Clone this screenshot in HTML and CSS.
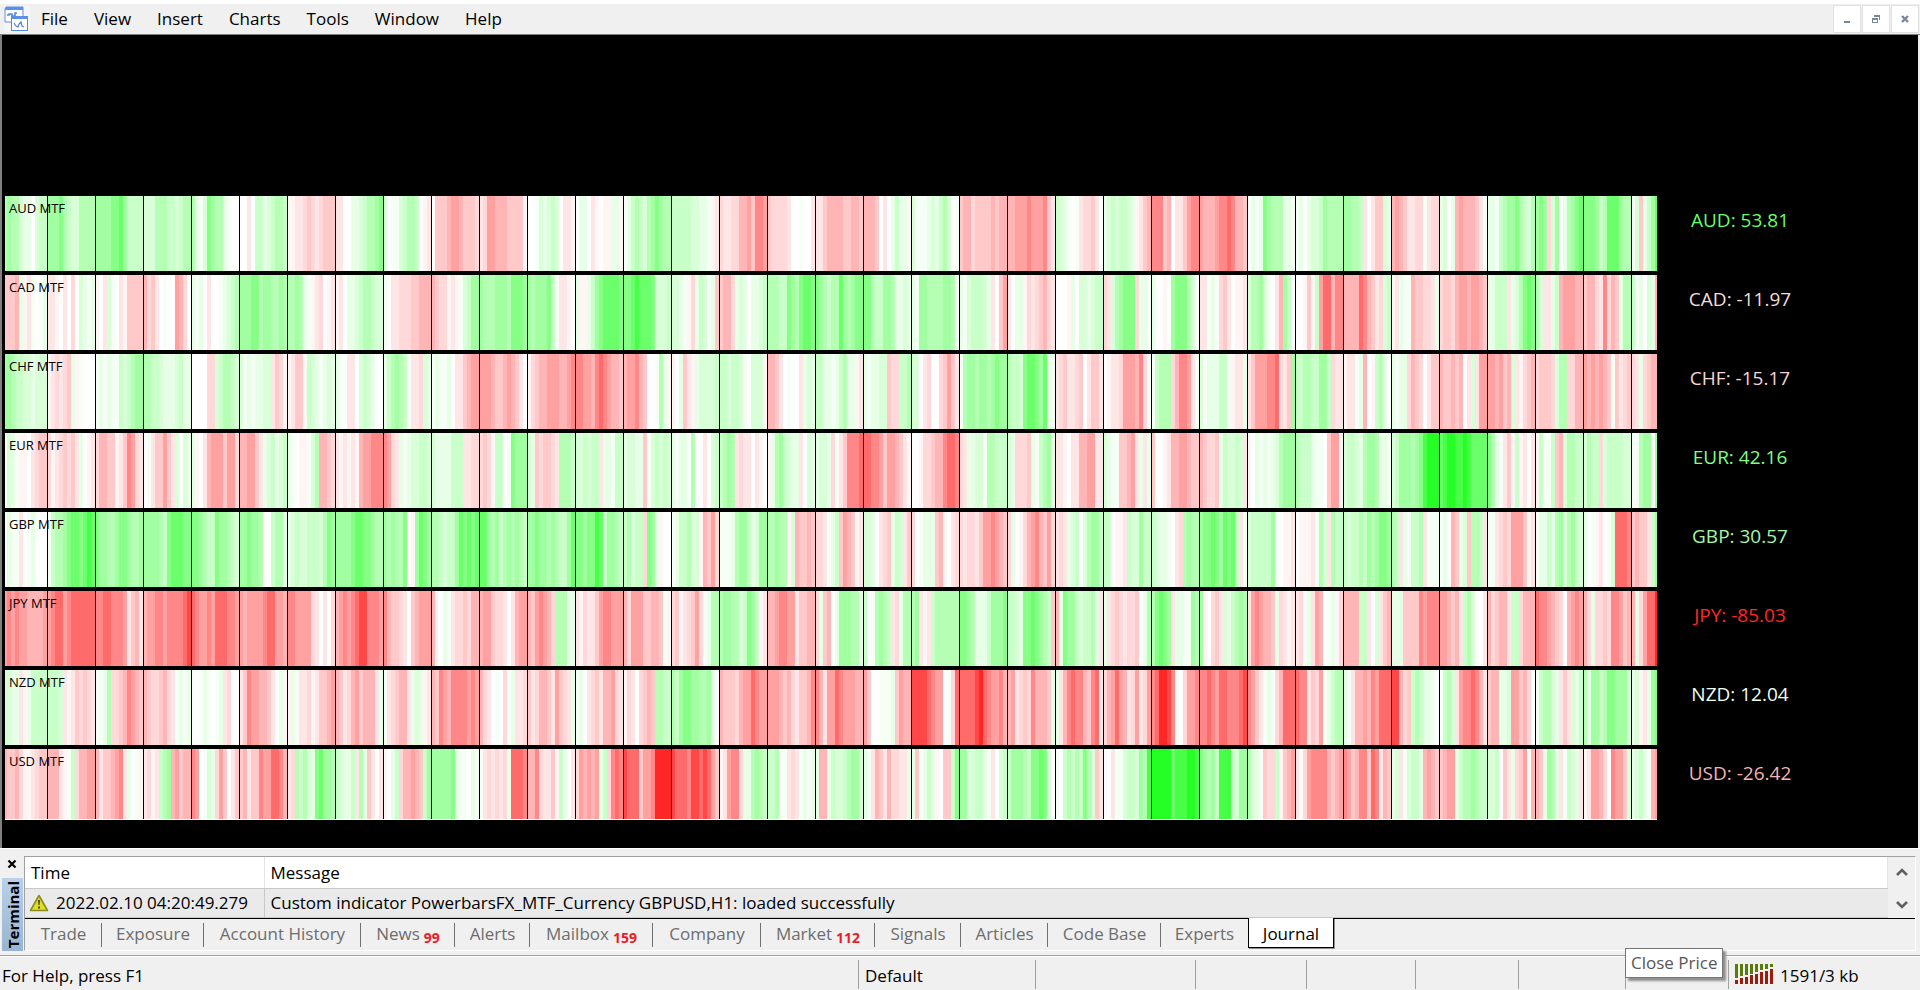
FILE: index.html
```html
<!DOCTYPE html>
<html lang="en">
<head>
<meta charset="utf-8">
<title>Currency strength terminal</title>
<link rel="stylesheet" href="styles.css">
</head>
<body>
<header class="menubar">
  <svg class="app-icon" viewBox="0 0 26 26" aria-hidden="true">
    <rect x="0" y="0" width="26" height="26" fill="#f6f6f6"/>
    <path d="M2 1h17v15H1V3z" fill="#fff" stroke="#5b8fe0" stroke-width="1"/>
    <path d="M2 1h17v3H1z" fill="#5a90e8"/>
    <path d="M3 9h2V8h3v2h3V7h2" fill="none" stroke="#4f86da" stroke-width="1.5"/>
    <rect x="7.500" y="10.500" width="16" height="14" fill="#fff" stroke="#4f8ae0"/>
    <path d="M7 10h17v3H7z" fill="#5a90e8"/>
    <path d="M10 17l2 3 2 1 1-3 2-2 1 4 2 1" fill="none" stroke="#4f86da" stroke-width="1.2"/>
  </svg>
  <nav class="menu" aria-label="Main">
    <button type="button">File</button>
    <button type="button">View</button>
    <button type="button">Insert</button>
    <button type="button">Charts</button>
    <button type="button">Tools</button>
    <button type="button">Window</button>
    <button type="button">Help</button>
  </nav>
  <div class="window-buttons">
    <button type="button" aria-label="Minimize"><svg viewBox="0 0 10 10"><path d="M2 7h6v2H2z" fill="#778899"/></svg></button>
    <button type="button" aria-label="Restore"><svg viewBox="0 0 10 10"><path d="M3 1h6v5H8V3H3zM1 4h6v5H1zM2 6v2h4V6z" fill="#778899" fill-rule="evenodd"/></svg></button>
    <button type="button" aria-label="Close"><svg viewBox="0 0 10 10"><path d="M2 2l6 6M8 2L2 8" stroke="#778899" stroke-width="2.400" fill="none"/></svg></button>
  </div>
</header>

<main class="chart" id="chart"></main>

<section class="terminal">
  <div class="dock">
    <button type="button" class="dock-close" aria-label="Close terminal"><svg viewBox="0 0 10 10"><path d="M1.500 1.500l7 7M8.500 1.500l-7 7" stroke="#000" stroke-width="2.200"/></svg></button>
    <div class="dock-title"><span>Terminal</span></div>
  </div>
  <div class="panel">
    <div class="log">
      <table class="journal">
        <thead><tr><th class="time">Time</th><th>Message</th></tr></thead>
        <tbody><tr>
          <td class="time"><span class="stamp"><svg viewBox="0 0 20 18" aria-hidden="true"><path d="M10 1.500L18.500 16.500H1.500z" fill="#dede2a" stroke="#8c8c1c" stroke-width="1.600" stroke-linejoin="round"/><path d="M9 6h2l-.4 5H9.400zM9 12.500h2v2H9z" fill="#4d4d10"/></svg>2022.02.10 04:20:49.279</span></td>
          <td>Custom indicator PowerbarsFX_MTF_Currency GBPUSD,H1: loaded successfully</td>
        </tr></tbody>
      </table>
      <div class="scroll">
        <button type="button" aria-label="Scroll up"><svg viewBox="0 0 12 10"><path d="M1 8l5-5 5 5" fill="none" stroke="#606060" stroke-width="2.600"/></svg></button>
        <button type="button" aria-label="Scroll down"><svg viewBox="0 0 12 10"><path d="M1 2l5 5 5-5" fill="none" stroke="#606060" stroke-width="2.600"/></svg></button>
      </div>
    </div>
    <div class="tabs" role="tablist">
      <button type="button" role="tab">Trade</button>
      <button type="button" role="tab">Exposure</button>
      <button type="button" role="tab">Account History</button>
      <button type="button" role="tab">News<b>99</b></button>
      <button type="button" role="tab">Alerts</button>
      <button type="button" role="tab">Mailbox<b>159</b></button>
      <button type="button" role="tab">Company</button>
      <button type="button" role="tab">Market<b>112</b></button>
      <button type="button" role="tab">Signals</button>
      <button type="button" role="tab">Articles</button>
      <button type="button" role="tab">Code Base</button>
      <button type="button" role="tab">Experts</button>
      <button type="button" role="tab" class="active" aria-selected="true">Journal</button>
    </div>
  </div>
</section>

<footer class="status">
  <span>For Help, press F1</span>
  <span>Default</span>
  <span></span><span></span><span></span><span></span>
  <span></span>
  <span class="tip-cell"><span class="tooltip" role="tooltip">Close Price</span></span>
  <span class="net"><svg viewBox="0 0 38 20" aria-hidden="true">
    <path d="M0 0h3v14H0zM5 0h3v12H5zM10 0h3v11h-3zM15 0h3v10h-3zM20 0h3v8h-3zM25 0h3v6h-3zM30 0h3v5h-3zM35 0h3v3h-3z" fill="#5a7a0c"/>
    <path d="M0 16h3v4H0zM5 14h3v6H5zM10 13h3v7h-3zM15 11h3v9h-3zM20 10h3v10h-3zM25 8h3v12h-3zM30 7h3v13h-3zM35 5h3v15h-3z" fill="#9a1c0c"/>
  </svg>1591/3 kb</span>
</footer>
<script src="chart.js"></script>
</body>
</html>
```
FILE: styles.css
```css
* { box-sizing: border-box; }
body {
  margin: 0;
  min-height: 100vh;
  display: flex;
  flex-direction: column;
  background: #f0f0f0;
  border-top: 4px solid #fff;
  color: #000;
  font: 17px/24px "Open Sans", "Noto Sans", sans-serif;
}
button {
  margin: 0;
  padding: 0;
  border: 0;
  background: none;
  color: inherit;
  font: inherit;
}

.menubar {
  display: flex;
  align-items: center;
  height: 31px;
  padding-left: 4px;
  border-bottom: 1px solid #808080;
}
.app-icon { width: 26px; height: 26px; }
.menu { display: flex; gap: 26px; padding-left: 11px; flex: 1; }
.window-buttons { display: flex; gap: 1px; padding-right: 1px; }
.window-buttons button {
  display: grid;
  place-items: center;
  width: 28px;
  height: 28px;
  background: #fff;
  border: 1px solid #e0e0e0;
}
.window-buttons svg { width: 10px; height: 10px; }

.chart {
  flex: 1;
  display: flex;
  flex-direction: column;
  gap: 4px;
  margin: 0 2px 0 0;
  padding: 161px 0 28px 3px;
  background: #000;
  border-left: 2px solid #808080;
}
.strip { flex: 75 0 0px; display: flex; }
.strip:last-child { flex-grow: 70; }
.bars { position: relative; flex: 1; min-width: 0; background: #fff; }
.bars svg { position: absolute; width: 100%; height: 100%; }
.bars span {
  position: absolute;
  left: 4px;
  top: 4px;
  font-size: 13px;
  line-height: 16px;
}
.reading {
  flex: none;
  width: 261px;
  height: 48px;
  padding-right: 95px;
  text-align: center;
  font-size: 19px;
  line-height: 48px;
}

.terminal {
  display: flex;
  padding: 7px 4px 0 2px;
  border-top: 1px solid #fff;
}
.dock { display: flex; flex-direction: column; width: 22px; }
.dock-close { display: grid; place-items: center; width: 20px; height: 16px; }
.dock-close svg { width: 10px; height: 10px; }
.dock-title {
  flex: 1;
  display: grid;
  place-items: center;
  margin-top: 6px;
  width: 21px;
  background: linear-gradient(#b9d1ea, #99b4d1);
}
.dock-title span {
  writing-mode: vertical-rl;
  transform: rotate(180deg);
  font-size: 15px;
  line-height: 20px;
  font-weight: 700;
}
.panel {
  flex: 1;
  border: 1px solid #a0a0a0;
  border-right-color: #fff;
  border-bottom-color: #fff;
}
.log { display: flex; }
.journal { flex: 1; border-collapse: collapse; table-layout: fixed; background: #fff; }
.journal th, .journal td { padding: 0 6px; text-align: left; font-weight: 400; }
.journal th { height: 32px; padding-top: 2px; border-bottom: 1px solid #c8c8c8; border-right: 1px solid #e4e4e4; }
.journal td { height: 29px; border-bottom: 1px solid #c8c8c8; background: #eaeaea; }
.journal td.time { border-right: 1px solid #c8c8c8; padding: 0 4px; }
.journal .time { width: 239px; }
.stamp { display: flex; align-items: center; gap: 7px; white-space: nowrap; }
.stamp svg { width: 20px; height: 18px; }
.scroll { display: flex; flex-direction: column; width: 27px; padding: 4px 0 2px; justify-content: space-between; }
.scroll button { display: grid; place-items: center; height: 22px; }
.scroll svg { width: 12px; height: 10px; }

.tabs {
  display: grid;
  grid-template-columns: 77px 102px 157px 94px 75px 123px 108px 114px 86px 87px 113px 87px 86px;
  height: 32px;
  border-top: 1px solid #000;
  color: #6d6d6d;
}
.tabs button { position: relative; display: flex; align-items: center; justify-content: center; height: 30px; white-space: nowrap; }
.tabs button:not(.active)::after {
  content: "";
  position: absolute;
  right: 0;
  top: 4px;
  height: 24px;
  border-right: 1px solid #707070;
}
.tabs button:nth-child(12)::after { display: none; }
.tabs b { padding: 8px 0 0 4px; color: #ed1c24; font-size: 14px; line-height: 16px; }
.tabs .active {
  height: 30px;
  margin-top: -1px;
  padding-top: 2px;
  background: #fff;
  border: 1px solid #000;
  border-top: 0;
  box-shadow: 1px 1px 0 #909090;
  color: #000;
}

.status {
  display: grid;
  grid-template-columns: 858fr 177fr 160fr 111fr 109fr 103fr 107fr 103fr 192fr;
  margin-top: 4px;
  padding-top: 4px;
  height: 35px;
  border-top: 1px solid #a0a0a0;
  box-shadow: inset 0 1px 0 #fff;
}
.status > span { height: 29px; padding-left: 6px; line-height: 31px; white-space: nowrap; }
.status > span:first-child { padding-left: 2px; }
.status > span + span { border-left: 1px solid #a0a0a0; }
.tip-cell { position: relative; }
.tooltip {
  position: absolute;
  left: -1px;
  bottom: 11px;
  padding: 0 5px;
  border: 1px solid #767676;
  background: #fff;
  box-shadow: 3px 3px 2px #909090;
  color: #575757;
  line-height: 28px;
}
.net { display: flex; gap: 7px; }
.net svg { width: 38px; height: 20px; margin-top: 4px; }
```
FILE: chart.js
```js
// One character per 4-unit bar: capitals are strength, small letters weakness,
// a/A faintest to j/J fullest. Each group is one 48-unit session.
const STEP = 4;
const SESSION = 48;
const WIDTH = 1652;
const LEAD = 6;
const LEVELS = [4, 10, 15, 21, 29, 37, 47, 58, 72, 85];

const currencies = [
  { code: "AUD", value: "53.81", color: "#66ff66", bars: "EEFEECBB.CDD FFFGEDCCEEEE FFFFGGHFDDDD CCCEEEDDCDEE EBACGFEEBA.. ..b.DDBCDEED aabbcdcbcddd bb..BBCDEEFG C.AACDEED.ab .dddeffedddc bcffeeedddda ..ACBCDC.bba .BB.ba.aaBBa ABDEDCEFGFEE DDDDDCCBBAab cbbcceefdggf dccccb..A..b bbdeeeeddeed eeed.b.BDBBa CAAABCBDEC.A deecddddedee eefffgfffgdb DCBA.Abccdb. BCDCDDCBabde gggde.bbdfgg feeefgghgeed .BABGFEEEBBA AB.BCCDFEEEE FFEEDb.bddCB efedbbccAbcc BC.BefeeedbA BBADEFFGEDCE FGFcCF.BEFGH GGGFDEHHHFEE ACdBDFH" },
  { code: "CAD", value: "-11.97", color: "#f0dede", bars: ".dddeBabA.AB bba.b.c.CBAB a.bCA.badddd ecdb.A..fec. BAB.b..ABCDE FFFGGEFFEEFE EEFEBAabc.ab ab.BBCDEEDCC A.bbcccddeee edccabaACDFF FEEEFFFEGGGF FEFFFGDAbba. BaaBDFGHHHHG GGHIHHHGCCCD CCBAacBDCABd deecBCB.BBCD EEEDDGFEGHHG GFEDEEHFEFGG GGEDDFFEBBCB BAFFEEEEFFEA BACDDDCBb.df b.BBacbcdecb ...aB.CCBCDD cbCEFGGGcBBA B..a.FGGGEC. bbABAcdb.aab CEEFCA.beFD. ..adaDfhhegg eeeehgedbcCD abBAAeddccbB cddceffeffed BBDDDbBCEGHG ECbbBDefffee deecbgcedBEE DAB.CBe" },
  { code: "CHF", value: "-15.17", color: "#f6d4d4", bars: "FFFEDDCCBCCC abcbcdBaA... ABABAADCDEFF EEDDCBBBCDBB ....ccCDEEDC CABABBCCbdca abddaDCBABCB BA.bb.CDCB.. BDEFEDAbbcCB ABAAB.bbdeff fffeddefedb. acdeefffeefg ggffeghgfeed effged..AEBa a.BdbaBCCCCD DDCDDCA.CCCa eedb.A..bBCB DDBBABDEBBab BABBCCdccDDE CC.bc..cdfdb AEFFEFFEFGFF EDDCGHHGFHBA bcdbbcd.bddb .abbcfffegcA ADEEEceggfbA CABBBDDAabbB bdfffgghcbdF DDEEDDFFDcbb abbABe.aDEB. BABBcedc.bdd eddede.bCbff ffefdeCbacde cdddcCEEccee fefefedAdbcd cbBcdee" },
  { code: "EUR", value: "42.16", color: "#80ff80", bars: ".ACBAaa.bcdd cabcdcdbB.ab ceeddabdgfcb .AbddfdbC.CB Ba.befffdffc eeffdbBCDBCD BA.aaACEeedc bababaeffggg gfcbBABCCDDC CBBBBDDDbbcc cdcaDD.AGFFF CBdcddcbEEED CCDCDDbBBADD BCCBBdACDCDC BABBAE..b.CD DEFEbcbb.ba. aBEFDCBBb.CB BCCBcAbdgggh hhggfdffedba ..accdeeghhg cbBBCCAEEDDD CBcccdBADEFB bba.bbeeffbb CBAAddefbBbB d..abeeffedd edccdBDCCDCb a.BABABCEFFF EDDDBAA.dffa CDDCBEFFEBBA CDFFFEFGIJJJ HIJJIIJIHHHH GEBAbdaDab.b aDAADdeCEEDD CEDDcCDDDDCC AAEFFAF" },
  { code: "GBP", value: "30.57", color: "#a4f8a4", bars: ".ABAAb.AB... ADEEFGHHGHIH GFFEEFGGFEEF FFFFEDGHHHGG GGFEDDGFFEDC FFGFFE..DEEB BCDCCDDDCEGF FFFFGHHGGFEE FEFEEG.aFHGF EEDCDDFHGHGH HHFEFDEFEFED FFGFFEFEDDFH GGFGGIHDFFED DECDDcGFBa.. ABDDECCaedfc AAABEFFDBCFF EEFEEaCedded ccbABDdfedab CCB.bcdBDCbd c.ABBBdea.bc cbccbdffgfed cB.acefgedfc bcbBCD.CEFFD DD.aabDCCFDD DCBBA.bcEFEE FGGHGFHGHDbA CDDDDDFA.aab .aaabAECbEDD DCDDEDFEFGGF EDbBADDEbAAA AB.edBCdEEDb AAbcdcfffdab ABBDBEFCEFDC B.Aab.AChhhg deddbDF" },
  { code: "JPY", value: "-85.03", color: "#ff2626", bars: "ffgfgffeeeef fghhfghhhhhh gghhgggfbdeb effggfgggghi hgffgfhhhggf feffffghhffe ggffffcb.b.c efgfghiigggf geddcb.defff ea.BAbccdcee effdccb.beff edfgfecEEEBB bacbbdfggfff ecfffddeedAa cdabcdfcABEE EFFEECDGFDab eefggffbddee cBde.BFFFEEB D.AEFEDbcBEE EFbabDEEEEEE GGFEBBBDFFFG DDCBGGHGFEDd eBGFFDCDDEBb Bbcdcbccd.BE EGHGFbBBAAFE Fa.cdbCBDEFE bfgfeedBcbab bcABbfe.ABac eeeeDDb.Cbde BBBddddgfggg ffedebDEC..b ecdeebDDceee hggfedc.efgf ecBccdcggfde eBcfhhj" },
  { code: "NZD", value: "12.04", color: "#f0fff0", bars: "CCCBBbaBDDDD DDDCbabdcdcb AABEccdegfed edccdecbABAB ..ABA.ABbc.. bdgffeedb.Ba aBAbbcabddef edbcefdeeebB AbcdeebBCBab edgfeggggfgf ecb.A.cABbbc dbceedbfdcbB AB.bcdbeefcb acb.cdedEEDD EDFGGFFEEFB. edddceffhgff fffedecbddeg gebffhgfffee fd..AAABdfee iiiihgff.Ach hhhhijhgffge efbcdcgeeedB Bbeghggedghb cefhfebcfbcf ghjjigA.cffg gghgfhhggghi gfdbABAcehhh hggbdcfABDEE BAbeefegfhhh iiecdDEDBBA. ADECbfgghgeb deeBBCffdec. ADEECBbdbCBD EBFFDEGGFFFC BCabBFG" },
  { code: "USD", value: "-26.42", color: "#f4b4b4", bars: "eeddecaabcdd eeebaADceeff ebddefgbB.Aa bcabDEFefdee gf.ACBcfd.bd debddgffhhge bcEDECBGHFFE DCBBDbEBdb.b a.BDceefedDF FFFFFGBAA.BA AbcbcbcBhhhg eegcbbdaDB.b cfefefBDcghg ihhhdffgjjjj ihhhgiihihfd abfggcBBEFED DDEAAbcbABAB BeeBDCCDEFFC BAbedbeccbbB BdABDBa.ddDG FFCCDDBAb.CD DFFFEDGGHGC. A.DEDEDGECdb ..bAACDDCFEI JJJJJHIIIJJI GFEFDIIIDCFF ECBAdccDadef bAcfggggedef gfdeggdhgbed BCbACDDBefed deffBDEEFEDD CCD.dbBcdfAe edBFEBbADCBb abffec.gffdC BCDBAef" }
];

function shade(ch) {
  if (ch === ".") return "#ffffff";
  const strong = ch < "a";
  const level = LEVELS[ch.toUpperCase().charCodeAt(0) - 65];
  const rest = Math.round(255 * (1 - level / 100));
  return strong ? `rgb(${rest},255,${rest})` : `rgb(255,${rest},${rest})`;
}

const chart = document.getElementById("chart");
for (const { code, value, color, bars } of currencies) {
  let shapes = "";
  bars.split(" ").forEach((group, g) => {
    const start = g * SESSION - LEAD;
    [...group].forEach((ch, i) => {
      shapes += `<rect x="${start + i * STEP}" width="${STEP}" height="1" fill="${shade(ch)}"/>`;
    });
    if (g > 0) shapes += `<rect x="${start}" width="1" height="1" fill="#000"/>`;
  });
  const strip = document.createElement("div");
  strip.className = "strip";
  strip.innerHTML =
    `<div class="bars"><svg viewBox="0 0 ${WIDTH} 1" preserveAspectRatio="none" shape-rendering="crispEdges" aria-hidden="true">${shapes}</svg>` +
    `<span>${code} MTF</span></div><div class="reading" style="color:${color}">${code}: ${value}</div>`;
  chart.append(strip);
}
```
